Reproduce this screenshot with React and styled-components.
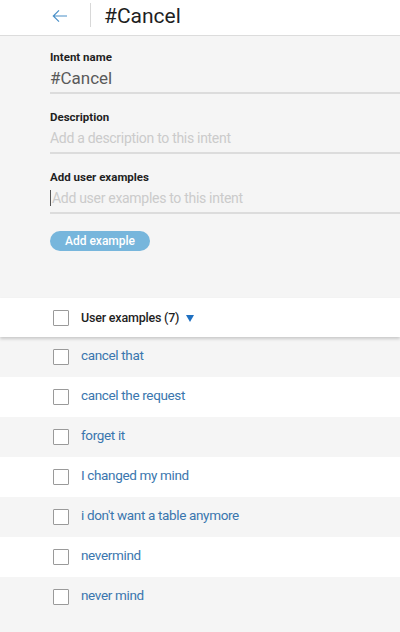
import React from "react";
import styled, { createGlobalStyle } from "styled-components";

const Global = createGlobalStyle`
  html, body { margin: 0; padding: 0; background: #f5f5f5; }
  body { font-family: Roboto, "Noto Sans", sans-serif; }
  * { box-sizing: border-box; }
`;

const Page = styled.div`
  width: 400px;
  min-height: 632px;
  background: #f5f5f5;
  overflow: hidden;
`;

const TopBar = styled.header`
  height: 36px;
  background: #fff;
  border-bottom: 1px solid #dcdcdc;
  display: flex;
  align-items: center;
  padding-left: 52px;
`;

const BackButton = styled.button`
  border: 0;
  background: none;
  padding: 0;
  width: 16px;
  height: 16px;
  display: flex;
  align-items: center;
  margin-top: -4px;
  cursor: pointer;
`;

const Divider = styled.div`
  width: 1px;
  height: 24px;
  background: #d8d8d8;
  margin: -6px 13px 0 22px;
`;

const Title = styled.h1`
  margin: -4px 0 0;
  font-size: 21px;
  font-weight: 400;
  color: #1f1f1f;
`;

const Form = styled.section`
  padding: 12px 0 0 50px;
  height: 262px;
  display: flex;
  flex-direction: column;
`;

const Field = styled.div`
  display: flex;
  flex-direction: column;
  margin-bottom: 14px;
`;

const Label = styled.label`
  font-size: 11.5px;
  font-weight: 700;
  color: #1f1f1f;
  line-height: 16px;
  margin-top: 1px;
  margin-bottom: -1px;
`;

const Input = styled.div`
  height: 30px;
  border-bottom: 2px solid #dcdcdc;
  font-size: ${(p) => (p.$value ? "17px" : "14px")};
  letter-spacing: ${(p) => (p.$value ? "0" : "-0.3px")};
  color: ${(p) => (p.$value ? "#5a5a5a" : "#cbcbcb")};
  line-height: 28px;
  display: flex;
  align-items: center;
`;

const Caret = styled.span`
  display: inline-block;
  width: 1px;
  height: 16px;
  background: #555;
  margin-right: 1px;
`;

const PillButton = styled.button`
  align-self: flex-start;
  margin-top: 3px;
  width: 100px;
  height: 20px;
  border: 0;
  border-radius: 10px;
  background: #77b6dc;
  color: #fff;
  font-family: inherit;
  font-size: 12px;
  font-weight: 500;
  padding: 0;
  line-height: 20px;
`;

const ListHeader = styled.div`
  height: 39px;
  background: #fff;
  display: flex;
  align-items: center;
  padding-left: 53px;
  box-shadow: 0 2px 3px rgba(0, 0, 0, 0.18);
  position: relative;
  z-index: 1;
`;

const HeaderText = styled.span`
  font-size: 12.5px;
  font-weight: 500;
  letter-spacing: -0.2px;
  color: #1f1f1f;
  margin-left: 12px;
  margin-top: -1px;
`;

const Caretdown = styled.span`
  display: inline-block;
  width: 0;
  height: 0;
  border-left: 4px solid transparent;
  border-right: 4px solid transparent;
  border-top: 7px solid #1f70c1;
  margin-left: 7px;
  margin-top: 1px;
`;

const Row = styled.div`
  height: 40px;
  display: flex;
  align-items: center;
  padding-left: 53px;
  background: ${(p) => (p.$odd ? "#f5f5f5" : "#fff")};
`;

const Box = styled.span`
  width: 16px;
  height: 16px;
  border: 1px solid #9a9a9a;
  border-radius: 1px;
  background: #fff;
  flex-shrink: 0;
`;

const Example = styled.span`
  font-size: 13.5px;
  letter-spacing: -0.35px;
  color: #3a76ae;
  margin-left: 12px;
  margin-top: -4px;
`;

const examples = [
  "cancel that",
  "cancel the request",
  "forget it",
  "I changed my mind",
  "i don't want a table anymore",
  "nevermind",
  "never mind",
];

export default function App() {
  return (
    <Page>
      <Global />
      <TopBar>
        <BackButton aria-label="Back">
          <svg width="16" height="14" viewBox="0 0 16 14" fill="none" stroke="#4a90c8" strokeWidth="1.2">
            <path d="M15 7H1.5M7 1.3L1.3 7L7 12.7" />
          </svg>
        </BackButton>
        <Divider />
        <Title>#Cancel</Title>
      </TopBar>
      <Form>
        <Field>
          <Label>Intent name</Label>
          <Input $value>#Cancel</Input>
        </Field>
        <Field>
          <Label>Description</Label>
          <Input>Add a description to this intent</Input>
        </Field>
        <Field>
          <Label>Add user examples</Label>
          <Input>
            <Caret />
            Add user examples to this intent
          </Input>
        </Field>
        <PillButton>Add example</PillButton>
      </Form>
      <ListHeader>
        <Box />
        <HeaderText>User examples (7)</HeaderText>
        <Caretdown />
      </ListHeader>
      {examples.map((e, i) => (
        <Row key={e} $odd={i % 2 === 0}>
          <Box />
          <Example>{e}</Example>
        </Row>
      ))}
    </Page>
  );
}
